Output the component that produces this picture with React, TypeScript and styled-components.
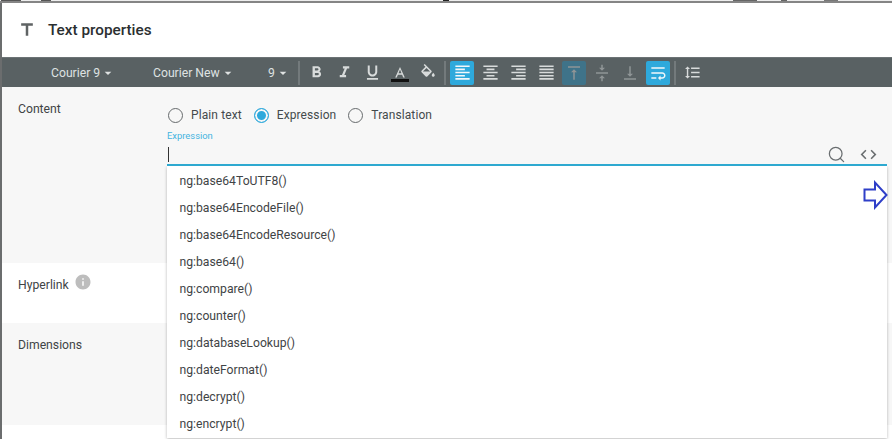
import React from 'react';
import styled, { createGlobalStyle } from 'styled-components';
import { Search } from 'lucide-react';
import {
  MdArrowDropDown,
  MdCode,
  MdFormatAlignCenter,
  MdFormatAlignJustify,
  MdFormatAlignLeft,
  MdFormatAlignRight,
  MdFormatBold,
  MdFormatItalic,
  MdFormatLineSpacing,
  MdFormatUnderlined,
  MdInfo,
  MdTitle,
  MdVerticalAlignBottom,
  MdVerticalAlignCenter,
  MdVerticalAlignTop,
  MdWrapText,
} from 'react-icons/md';

const functions = [
  'ng:base64ToUTF8()',
  'ng:base64EncodeFile()',
  'ng:base64EncodeResource()',
  'ng:base64()',
  'ng:compare()',
  'ng:counter()',
  'ng:databaseLookup()',
  'ng:dateFormat()',
  'ng:decrypt()',
  'ng:encrypt()',
];

const GlobalStyle = createGlobalStyle`
  html, body {
    margin: 0;
    padding: 0;
    background: #fff;
  }
  * {
    box-sizing: border-box;
  }
`;

const Page = styled.div`
  width: 892px;
  height: 439px;
  overflow: hidden;
  display: flex;
  flex-direction: column;
  font-family: Roboto, "Liberation Sans", sans-serif;
  color: #444a4c;
`;

// the window behind the dialog only peeks out as a few dark specks
const BackdropStrip = styled.div`
  height: 3px;
  flex: none;
  background-color: #858585;
  background-repeat: no-repeat;
  background-image:
    linear-gradient(#555, #555), linear-gradient(#555, #555), linear-gradient(#222, #222),
    linear-gradient(#666, #666), linear-gradient(#666, #666), linear-gradient(#777, #777),
    linear-gradient(#eee, #eee);
  background-size: 20px 1px, 10px 1px, 6px 1px, 24px 1px, 6px 1px, 14px 1px, 100% 1px;
  background-position: 1px 0, 41px 0, 443px 0, 733px 0, 781px 0, 824px 0, 0 0;
`;

const Dialog = styled.div`
  position: relative;
  flex: 1;
  background: #fff;
  border-left: 2px solid #6b6d6e;
`;

const Header = styled.div`
  height: 54px;
  display: flex;
  align-items: center;
  gap: 11px;
  padding-left: 15px;
  color: #5f6364;
`;

const Title = styled.h1`
  margin: 0;
  font-size: 15.3px;
  font-weight: 500;
  color: #2b2f31;
`;

const Toolbar = styled.div`
  height: 30px;
  display: flex;
  align-items: center;
  padding-left: 49px;
  background: #596163;
  border-top: 1px solid #6c7375;
  color: #d8dbdb;
`;

const Select = styled.div<{ $width: number }>`
  width: ${(p) => p.$width}px;
  display: flex;
  align-items: center;
  font-size: 12.2px;
  color: #dfe2e2;
`;

const Caret = styled(MdArrowDropDown)`
  width: 16px;
  height: 16px;
  flex: none;
`;

const Separator = styled.div`
  width: 2px;
  height: 24px;
  flex: none;
  margin: 0 4px;
  background: #737a7c;
`;

const ToolGroup = styled.div`
  display: flex;
  align-items: center;
  gap: 4px;
`;

const ToolButton = styled.div<{ $active?: boolean; $muted?: boolean }>`
  width: 24px;
  height: 24px;
  flex: none;
  display: flex;
  align-items: center;
  justify-content: center;
  border-radius: 2px;
  background: ${(p) => (p.$active ? (p.$muted ? '#3f7389' : '#2ea9dc') : 'transparent')};
  color: ${(p) => (p.$muted ? '#8f9596' : p.$active ? '#f2f7fa' : '#d8dbdb')};
`;

const Section = styled.div<{ $height: number; $shaded?: boolean }>`
  height: ${(p) => p.$height}px;
  display: flex;
  background: ${(p) => (p.$shaded ? '#f7f7f7' : '#fff')};
`;

const Label = styled.div`
  width: 165px;
  flex: none;
  padding: 15px 0 0 16px;
  display: flex;
  align-items: flex-start;
  gap: 5px;
  font-size: 12.2px;
  line-height: 14px;
  color: #3f4446;
  svg {
    margin-top: -5px;
  }
`;

const Field = styled.div`
  flex: 1;
  margin-right: 5px;
  display: flex;
  flex-direction: column;
`;

const RadioRow = styled.div`
  display: flex;
  align-items: center;
  gap: 12px;
  height: 16px;
  margin: 20px 0 0 1px;
`;

const Radio = styled.label`
  display: flex;
  align-items: center;
  gap: 8px;
  font-size: 12px;
  letter-spacing: 0.1px;
  color: #444a4c;
`;

const RadioDot = styled.span<{ $checked?: boolean }>`
  width: 15px;
  height: 15px;
  border-radius: 50%;
  border: 1.5px solid ${(p) => (p.$checked ? '#2ea9dc' : '#666a6c')};
  background: ${(p) => (p.$checked ? '#2ea9dc' : 'transparent')};
  box-shadow: ${(p) => (p.$checked ? 'inset 0 0 0 2px #f7f7f7' : 'none')};
`;

const FloatingLabel = styled.div`
  margin-top: 7px;
  font-size: 9.4px;
  line-height: 11px;
  color: #45b4e0;
`;

const InputLine = styled.div`
  height: 25px;
  padding-top: 3px;
  display: flex;
  align-items: center;
  justify-content: space-between;
  border-bottom: 2px solid #2ea9d0;
`;

const TextCaret = styled.span`
  width: 1px;
  height: 15px;
  margin-left: 1px;
  background: #333;
`;

const InputIcons = styled.div`
  display: flex;
  align-items: center;
  gap: 13px;
  padding-right: 9px;
  color: #6a6e70;
`;

const AutoComplete = styled.ul`
  position: absolute;
  left: 165px;
  top: 163px;
  width: 720px;
  height: 272px;
  margin: 0;
  padding: 1px 0 0;
  list-style: none;
  background: #fff;
  box-shadow: 0 1px 3px rgba(0, 0, 0, 0.28);
  clip-path: inset(0 -5px -5px -5px);
`;

const Option = styled.li`
  height: 27px;
  padding-left: 12.5px;
  display: flex;
  align-items: center;
  font-size: 12.2px;
  color: #3f4446;
`;

const Pointer = styled.svg`
  position: absolute;
  left: 861px;
  top: 177px;
`;

const App: React.FC = () => {
  return (
    <Page>
      <GlobalStyle />
      <BackdropStrip />
      <Dialog>
        <Header>
          <MdTitle size={20} />
          <Title>Text properties</Title>
        </Header>
        <Toolbar>
          <Select $width={102}>Courier 9<Caret /></Select>
          <Select $width={115}>Courier New<Caret /></Select>
          <Select $width={26}>9<Caret /></Select>
          <Separator />
          <ToolGroup>
            <ToolButton><MdFormatBold size={19} /></ToolButton>
            <ToolButton><MdFormatItalic size={19} /></ToolButton>
            <ToolButton><MdFormatUnderlined size={19} /></ToolButton>
            <ToolButton>
              <svg width="20" height="22" viewBox="0 0 20 22">
                <path d="M10 5 5.2 15.5h1.6l1.1-2.7h4.2l1.1 2.7h1.6L10 5zM8.5 11.3 10 7.5l1.5 3.8z" fill="currentColor" fillRule="evenodd" />
                <rect x="1" y="17" width="18" height="3" fill="#111" />
              </svg>
            </ToolButton>
            <ToolButton>
              <svg width="18" height="18" viewBox="0 0 24 24">
                <path
                  d="M16.56 8.94 7.62 0 6.21 1.41l2.38 2.38-5.15 5.15c-.59.59-.59 1.54 0 2.12l5.5 5.5c.29.29.68.44 1.06.44s.77-.15 1.06-.44l5.5-5.5c.59-.58.59-1.53 0-2.12zM5.21 10 10 5.21 14.79 10H5.21zM19 11.5s-2 2.17-2 3.5c0 1.1.9 2 2 2s2-.9 2-2c0-1.33-2-3.5-2-3.5z"
                  fill="currentColor"
                />
              </svg>
            </ToolButton>
          </ToolGroup>
          <Separator />
          <ToolGroup>
            <ToolButton $active><MdFormatAlignLeft size={19} /></ToolButton>
            <ToolButton><MdFormatAlignCenter size={19} /></ToolButton>
            <ToolButton><MdFormatAlignRight size={19} /></ToolButton>
            <ToolButton><MdFormatAlignJustify size={19} /></ToolButton>
            <ToolButton $muted $active><MdVerticalAlignTop size={18} /></ToolButton>
            <ToolButton $muted><MdVerticalAlignCenter size={18} /></ToolButton>
            <ToolButton $muted><MdVerticalAlignBottom size={18} /></ToolButton>
            <ToolButton $active><MdWrapText size={20} /></ToolButton>
          </ToolGroup>
          <Separator />
          <ToolButton><MdFormatLineSpacing size={17} /></ToolButton>
        </Toolbar>
        <Section $height={176} $shaded>
          <Label>Content</Label>
          <Field>
            <RadioRow>
              <Radio>
                <RadioDot />
                Plain text
              </Radio>
              <Radio>
                <RadioDot $checked />
                Expression
              </Radio>
              <Radio>
                <RadioDot />
                Translation
              </Radio>
            </RadioRow>
            <FloatingLabel>Expression</FloatingLabel>
            <InputLine>
              <TextCaret />
              <InputIcons>
                <Search size={19} strokeWidth={1.6} />
                <MdCode size={19} />
              </InputIcons>
            </InputLine>
          </Field>
        </Section>
        <Section $height={60}>
          <Label>
            Hyperlink
            <MdInfo size={18} color="#bdbdbd" />
          </Label>
        </Section>
        <Section $height={102} $shaded>
          <Label>Dimensions</Label>
        </Section>
        <AutoComplete>
          {functions.map((name) => (
            <Option key={name}>{name}</Option>
          ))}
        </AutoComplete>
        <Pointer width="25" height="30" viewBox="0 0 25 30">
          <path d="M1.5 9.5h10.5V2.5L23.5 15 12 27.5v-7H1.5z" fill="#fff" stroke="#2f3fc8" strokeWidth="2" />
        </Pointer>
      </Dialog>
    </Page>
  );
};

export default App;
